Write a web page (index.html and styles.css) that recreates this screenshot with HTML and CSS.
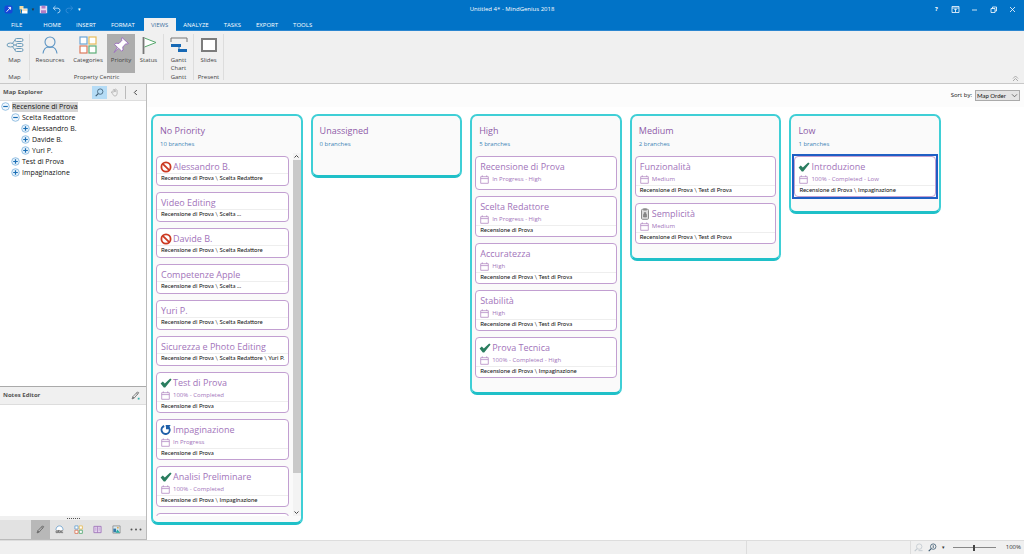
FILE: index.html
```
<!DOCTYPE html>
<html lang="en">
<head>
<meta charset="utf-8">
<title>Untitled 4* - MindGenius 2018</title>
<link rel="stylesheet" href="styles.css">
</head>
<body>
<svg class="defs" aria-hidden="true">
  <symbol id="cal" viewBox="0 0 9 9"><path d="M.7 1.7h7.6v6.600H.7zM.7 3.600h7.600M2.300.4v1.600M6.700.4v1.600" fill="none" stroke="#b48bc4" stroke-width=".8"/></symbol>
  <symbol id="check" viewBox="0 0 12 12"><path d="M.6 6.600 2.800 4.600l2 1.800L10.200 1.400l1.400 1.200L5.200 10.500H3.800z" fill="#2a7d5f"/></symbol>
  <symbol id="ban" viewBox="0 0 12 12"><circle cx="6" cy="6" r="4.600" fill="#fff" stroke="#cc3a22" stroke-width="1.800"/><path d="m2.800 2.800 6.400 6.400" stroke="#cc3a22" stroke-width="1.800"/></symbol>
  <symbol id="redo" viewBox="0 0 12 12"><path d="M4.200 2A4.100 4.100 0 1 0 9.600 5" fill="none" stroke="#1e5fa8" stroke-width="1.900"/><path d="M5.600 1h5.200L9.600 2.300l.8 3H6V3.500z" fill="#1e5fa8"/></symbol>
  <symbol id="clip" viewBox="0 0 12 12"><rect x="2.500" y="1.300" width="7" height="10" rx="1" fill="#ddd" stroke="#8a8a8a"/><rect x="4.300" y=".3" width="3.400" height="2.200" fill="#8a8a8a"/><path d="M4.500 9V6.400h3V9zM5.200 6.400V4.600h1.600v1.800" fill="#8a8a8a" stroke="#777" stroke-width=".6"/></symbol>
  <symbol id="plus" viewBox="0 0 9 9"><circle cx="4.500" cy="4.500" r="3.800" fill="#e4f1fb" stroke="#7fb2dc" stroke-width=".8"/><path d="M2.200 4.500h4.600M4.500 2.200v4.600" stroke="#1c6fb5" stroke-width="1.200"/></symbol>
  <symbol id="minus" viewBox="0 0 9 9"><circle cx="4.500" cy="4.500" r="3.800" fill="#f3f9fe" stroke="#7fb2dc" stroke-width=".8"/><path d="M2.200 4.500h4.600" stroke="#1c6fb5" stroke-width="1.200"/></symbol>
  <symbol id="mag" viewBox="0 0 10 10"><circle cx="5.800" cy="4" r="3" fill="none" stroke="#3c5a72" stroke-width=".9"/><path d="M3.600 6.200.8 9" stroke="#3c5a72" stroke-width="1.200"/></symbol>
  <symbol id="pencil" viewBox="0 0 10 10"><path d="M1.200 8.800 2 6.400 7 1.200q1-.4 1.600.8L3.500 7.900zM2 6.400l1.500 1.500M6 2.300l1.600 1.500" fill="none" stroke="#555" stroke-width=".8"/></symbol>
</svg>

<header class="titlebar">
  <div class="quick">
    <svg class="ic9" viewBox="0 0 9 9"><rect x=".5" y=".5" width="8" height="8" rx="2" fill="#1747d8"/><path d="M2.500 6.800 6.500 2.500M4.300 2.400h2.300v2.300" stroke="#fff" fill="none" stroke-width=".9"/></svg>
    <button type="button" aria-label="Open"><svg class="ic9" viewBox="0 0 9 9"><path d="M.5 1h4v3.500h-4z" fill="#f2dca0"/><rect x="3" y="3.500" width="5.500" height="5" fill="#fff"/><path d="M3 5h5.500M1.500 5v3h1" stroke="#d8b36a" fill="none" stroke-width=".8"/></svg></button>
    <span class="tiny dark">▾</span>
    <button type="button" aria-label="Save"><svg class="ic9" viewBox="0 0 9 9"><path d="M.8.8h7.400v7.400H.8z" fill="#e9d9f3"/><path d="M2.500.8h4v2.700h-4zM2 5.200h5v3H2z" fill="#b27cc4"/></svg></button>
    <button type="button" aria-label="Undo"><svg class="ic9" viewBox="0 0 9 9"><path d="M3.500 1 1.200 3.200l2.300 2.200M1.200 3.200H6q2 .3 2 2.400T5.500 8" fill="none" stroke="#a9d2f3"/></svg></button>
    <button type="button" aria-label="Redo"><svg class="ic9" viewBox="0 0 9 9"><path d="m5.500 1 2.300 2.200-2.300 2.200M7.800 3.200H3Q1 3.500 1 5.600T3.500 8" fill="none" stroke="#2f8ad6"/></svg></button>
    <span class="tiny">▾</span>
  </div>
  <h1>Untitled 4* - MindGenius 2018</h1>
  <div class="window">
    <button type="button" aria-label="Help">?</button>
    <button type="button" aria-label="Ribbon options"><svg class="ic9" viewBox="0 0 9 9"><path d="M1 1.500h7v6H1zM1 3h7M4.500 7V4M3.300 5l1.200-1.200L5.700 5" fill="none" stroke="#fff" stroke-width=".8"/></svg></button>
    <button type="button" aria-label="Minimize"><svg class="ic9" viewBox="0 0 9 9"><path d="M2 5h5" stroke="#fff" stroke-width=".8"/></svg></button>
    <button type="button" aria-label="Restore"><svg class="ic9" viewBox="0 0 9 9"><path d="M2 3.500h4v4H2zM3.500 3.500V2h4v4H6" fill="none" stroke="#fff" stroke-width=".8"/></svg></button>
    <button type="button" aria-label="Close"><svg class="ic9" viewBox="0 0 9 9"><path d="m2 2 5 5M7 2 2 7" stroke="#fff" stroke-width=".8"/></svg></button>
  </div>
</header>

<nav class="tabs">
  <a class="file" href="#">FILE</a><a href="#">HOME</a><a href="#">INSERT</a><a href="#">FORMAT</a><a class="active" href="#">VIEWS</a><a href="#">ANALYZE</a><a href="#">TASKS</a><a href="#">EXPORT</a><a href="#">TOOLS</a>
</nav>

<section class="ribbon">
  <div class="group">
    <div class="tools"><button type="button"><svg class="ic18" viewBox="0 0 18 18"><g fill="none" stroke="#6c9cba" stroke-width="1"><ellipse cx="4.500" cy="9" rx="3.500" ry="2"/><rect x="9" y="2.500" width="8" height="3" rx="1.500"/><rect x="10" y="7.500" width="7" height="3" rx="1.500"/><rect x="9" y="12.500" width="8" height="3" rx="1.500"/><path d="M8 9h2M6.500 7.300 9 4M6.500 10.700 9 14"/></g></svg><span>Map</span></button></div>
    <p>Map</p>
  </div>
  <div class="group">
    <div class="tools">
      <button type="button" class="wide"><svg class="ic18" viewBox="0 0 18 18"><g fill="none" stroke="#5d95c4" stroke-width="1.100"><circle cx="9" cy="6" r="5"/><path d="M2 17.500Q3 11.500 7 11q2 .8 4 0 4 .5 5 6.500"/></g></svg><span>Resources</span></button>
      <button type="button" class="wide"><svg class="ic18" viewBox="0 0 18 18"><g fill="#fff" stroke-width="1.200"><rect x="1" y="1" width="7" height="7" stroke="#6ca5d4"/><rect x="10" y="1" width="7" height="7" stroke="#e8bd5c"/><rect x="1" y="10" width="7" height="7" stroke="#dc7a5c"/><rect x="10" y="10" width="7" height="7" stroke="#5cae78"/></g></svg><span>Categories</span></button>
      <button type="button" class="pressed"><svg class="ic18" viewBox="0 0 18 18"><path d="m10 1.500 6.500 6-1.700.6-1-.4-3 3.300.3 3-1.500 1.200-3-3L2 16.500l3.500-5.200-3-2.800L4 7.200l3 .2 3-3.200-.5-1z" fill="#fff" stroke="#9c72bd" stroke-width="1"/></svg><span>Priority</span></button>
      <button type="button"><svg class="ic18" viewBox="0 0 18 18"><path d="M4.500 2 16 6.500 4.500 11" fill="#fff" stroke="#55a86c"/><path d="M3.500 1v17" stroke="#777" stroke-width="1.800"/></svg><span>Status</span></button>
    </div>
    <p>Property Centric</p>
  </div>
  <div class="group">
    <div class="tools"><button type="button" class="slim"><svg class="ic18" viewBox="0 0 18 18"><path d="M1 6V2h16v4" fill="none" stroke="#777"/><path d="M1 8h10v3H1zM8 13h9v3H8z" fill="#1769b5"/><path d="M9 11v3" stroke="#1769b5"/></svg><span>Gantt Chart</span></button></div>
    <p>Gantt</p>
  </div>
  <div class="group">
    <div class="tools"><button type="button" class="slim"><svg class="ic18" viewBox="0 0 18 18"><rect x="2" y="3" width="14" height="12" fill="#fff" stroke="#7c7c7c" stroke-width="2"/></svg><span>Slides</span></button></div>
    <p>Present</p>
  </div>
  <button type="button" class="collapse" aria-label="Collapse ribbon"><svg class="ic7" viewBox="0 0 7 7"><path d="M1 3.500 3.500 1 6 3.500M1 6l2.500-2.500L6 6" fill="none" stroke="#999" stroke-width=".8"/></svg></button>
</section>

<div class="workspace">
  <aside class="side">
    <div class="panel-head"><h2>Map Explorer</h2>
      <button type="button" class="lit" aria-label="Zoom"><svg class="ic9" viewBox="0 0 10 10"><use href="#mag"/></svg></button>
      <button type="button" aria-label="Pan"><svg class="ic9" viewBox="0 0 10 10"><path d="M2.500 6 1.300 4.500l1-.4L3.500 5V2l.8-.5.7.3.8-.8.8.6.7.3.6.6V6.500Q7.500 9 5.500 9 4 9 2.500 6M5 2v2.500M6.300 2v2.500" fill="none" stroke="#aaa" stroke-width=".8"/></svg></button>
      <button type="button" class="fold" aria-label="Collapse panel"><svg class="ic7" viewBox="0 0 7 7"><path d="M4.800 1 2.300 3.500 4.800 6" fill="none" stroke="#444"/></svg></button>
    </div>
    <ul class="tree">
      <li><div class="node"><svg class="ic9"><use href="#minus"/></svg><span class="picked">Recensione di Prova</span></div>
        <ul>
          <li><div class="node"><svg class="ic9"><use href="#minus"/></svg><span>Scelta Redattore</span></div>
            <ul>
              <li><div class="node"><svg class="ic9"><use href="#plus"/></svg><span>Alessandro B.</span></div></li>
              <li><div class="node"><svg class="ic9"><use href="#plus"/></svg><span>Davide B.</span></div></li>
              <li><div class="node"><svg class="ic9"><use href="#plus"/></svg><span>Yuri P.</span></div></li>
            </ul></li>
          <li><div class="node"><svg class="ic9"><use href="#plus"/></svg><span>Test di Prova</span></div></li>
          <li><div class="node"><svg class="ic9"><use href="#plus"/></svg><span>Impaginazione</span></div></li>
        </ul></li>
    </ul>
    <div class="panel-head notes-head"><h2>Notes Editor</h2>
      <button type="button" aria-label="Edit notes"><svg class="ic9" viewBox="0 0 10 10"><use href="#pencil"/><path d="M7.500 7.500h2v2h-2z" fill="#35b2ad"/></svg></button>
    </div>
    <div class="notes"></div>
    <div class="grip"><i></i></div>
    <div class="dock">
      <button type="button" class="on" aria-label="Notes"><svg class="ic9" viewBox="0 0 10 10"><use href="#pencil"/></svg></button>
      <button type="button" aria-label="Spelling"><svg class="ic9" viewBox="0 0 10 10"><path d="M1 5.500Q1.500 1 5 1t4 4.500" fill="#fff" stroke="#6aa0ce" stroke-width=".9"/><path d="M1.200 6.500h2v2h-2zM4 5.500v3h2v-2H4M9 6.500H7v2h2" fill="none" stroke="#555" stroke-width=".8"/></svg></button>
      <button type="button" aria-label="Categories"><svg class="ic9" viewBox="0 0 10 10"><g fill="#fff"><path d="M1 1h3.500v3.500H1z" stroke="#6ca5d4"/><path d="M5.800 1h3.500v3.500H5.800z" stroke="#e8bd5c"/><path d="M1 5.800h3.500v3.500H1z" stroke="#dc7a5c"/><path d="M5.800 5.800h3.500v3.500H5.800z" stroke="#5cae78"/></g></svg></button>
      <button type="button" aria-label="Library"><svg class="ic9" viewBox="0 0 10 10"><path d="M1 1.500h8v7H1z" fill="#e5d5ee" stroke="#a277bb"/><path d="M5 1.500v7M2.500 3.500h1.300M6.200 3.500h1.300M2.500 5.500h1.300M6.200 5.500h1.300" stroke="#a277bb" stroke-width=".8"/></svg></button>
      <button type="button" aria-label="Pictures"><svg class="ic9" viewBox="0 0 10 10"><path d="M1 1h8v8H1z" fill="#d9e8ef" stroke="#777" stroke-width=".7"/><path d="M1.500 4h3v4h-3z" fill="#3278a8"/><path d="M4 8.500 6 5l3 3.500z" fill="#25aaa0"/><circle cx="6.500" cy="3" r="1" fill="#e2a74d"/></svg></button>
      <button type="button" aria-label="More"><svg class="dots" viewBox="0 0 12 3"><g fill="#555"><circle cx="1.500" cy="1.500" r="1"/><circle cx="6" cy="1.500" r="1"/><circle cx="10.500" cy="1.500" r="1"/></g></svg></button>
    </div>
  </aside>

  <main class="main">
    <div class="sort"><label for="sort">Sort by:</label><div class="pick"><select id="sort"><option>Map Order</option></select><svg class="ic7" viewBox="0 0 7 7"><path d="m1 2.300 2.500 2.500L6 2.300" fill="none" stroke="#555" stroke-width=".8"/></svg></div></div>
    <div class="board">
      <section class="column">
        <h2>No Priority</h2><p class="count">10 branches</p>
        <div class="scroll">
          <div class="list">
            <article class="card"><h3><svg class="ic12"><use href="#ban"/></svg>Alessandro B.</h3><p class="path">Recensione di Prova \ Scelta Redattore</p></article>
            <article class="card"><h3>Video Editing</h3><p class="path">Recensione di Prova \ Scelta ...</p></article>
            <article class="card"><h3><svg class="ic12"><use href="#ban"/></svg>Davide B.</h3><p class="path">Recensione di Prova \ Scelta Redattore</p></article>
            <article class="card"><h3>Competenze Apple</h3><p class="path">Recensione di Prova \ Scelta ...</p></article>
            <article class="card"><h3>Yuri P.</h3><p class="path">Recensione di Prova \ Scelta Redattore</p></article>
            <article class="card"><h3>Sicurezza e Photo Editing</h3><p class="path">Recensione di Prova \ Scelta Redattore \ Yuri P.</p></article>
            <article class="card"><h3><svg class="ic12"><use href="#check"/></svg>Test di Prova</h3><p class="meta"><svg class="ic9"><use href="#cal"/></svg>100% - Completed</p><p class="path">Recensione di Prova</p></article>
            <article class="card"><h3><svg class="ic12"><use href="#redo"/></svg>Impaginazione</h3><p class="meta"><svg class="ic9"><use href="#cal"/></svg>In Progress</p><p class="path">Recensione di Prova</p></article>
            <article class="card"><h3><svg class="ic12"><use href="#check"/></svg>Analisi Preliminare</h3><p class="meta"><svg class="ic9"><use href="#cal"/></svg>100% - Completed</p><p class="path">Recensione di Prova \ Impaginazione</p></article>
            <article class="card"></article>
          </div>
          <div class="bar"><svg class="ic7" viewBox="0 0 7 7"><path d="m1.500 4.500 2-2 2 2" fill="none" stroke="#444"/></svg><i></i><svg class="ic7" viewBox="0 0 7 7"><path d="m1.500 2.500 2 2 2-2" fill="none" stroke="#444"/></svg></div>
        </div>
      </section>
      <section class="column empty">
        <h2>Unassigned</h2><p class="count">0 branches</p>
      </section>
      <section class="column">
        <h2>High</h2><p class="count">5 branches</p>
        <div class="list">
          <article class="card"><h3>Recensione di Prova</h3><p class="meta"><svg class="ic9"><use href="#cal"/></svg>In Progress - High</p></article>
          <article class="card"><h3>Scelta Redattore</h3><p class="meta"><svg class="ic9"><use href="#cal"/></svg>In Progress - High</p><p class="path">Recensione di Prova</p></article>
          <article class="card"><h3>Accuratezza</h3><p class="meta"><svg class="ic9"><use href="#cal"/></svg>High</p><p class="path">Recensione di Prova \ Test di Prova</p></article>
          <article class="card"><h3>Stabilità</h3><p class="meta"><svg class="ic9"><use href="#cal"/></svg>High</p><p class="path">Recensione di Prova \ Test di Prova</p></article>
          <article class="card"><h3><svg class="ic12"><use href="#check"/></svg>Prova Tecnica</h3><p class="meta"><svg class="ic9"><use href="#cal"/></svg>100% - Completed - High</p><p class="path">Recensione di Prova \ Impaginazione</p></article>
        </div>
      </section>
      <section class="column">
        <h2>Medium</h2><p class="count">2 branches</p>
        <div class="list">
          <article class="card"><h3>Funzionalità</h3><p class="meta"><svg class="ic9"><use href="#cal"/></svg>Medium</p><p class="path">Recensione di Prova \ Test di Prova</p></article>
          <article class="card"><h3><svg class="ic12"><use href="#clip"/></svg>Semplicità</h3><p class="meta"><svg class="ic9"><use href="#cal"/></svg>Medium</p><p class="path">Recensione di Prova \ Test di Prova</p></article>
        </div>
      </section>
      <section class="column">
        <h2>Low</h2><p class="count">1 branches</p>
        <div class="list">
          <article class="card selected"><h3><svg class="ic12"><use href="#check"/></svg>Introduzione</h3><p class="meta"><svg class="ic9"><use href="#cal"/></svg>100% - Completed - Low</p><p class="path">Recensione di Prova \ Impaginazione</p></article>
        </div>
      </section>
    </div>
  </main>
</div>

<footer class="status">
  <div class="cell"></div>
  <div class="zoom">
    <svg class="ic9 faint" viewBox="0 0 10 10"><use href="#mag"/><path d="M5 8.500h4.500" stroke="#3c5a72"/></svg>
    <button type="button" aria-label="Zoom"><svg class="ic9" viewBox="0 0 10 10"><use href="#mag"/><path d="M5.800 2.500v3" stroke="#3c5a72"/></svg></button>
    <span class="tiny dark">▾</span>
    <input type="range" min="0" max="200" value="100" aria-label="Zoom level">
    <span>100%</span>
  </div>
</footer>
</body>
</html>
```
FILE: styles.css
```
* { box-sizing: border-box; }
body {
  margin: 0;
  height: 100vh;
  display: flex;
  flex-direction: column;
  overflow: hidden;
  background: #fff;
  font: 7px/11px "Open Sans", "Noto Sans", sans-serif;
  color: #333;
}
h1, h2, h3, p, ul { margin: 0; padding: 0; font-weight: 400; }
ul { list-style: none; }
a { color: inherit; text-decoration: none; }
button {
  display: flex;
  align-items: center;
  justify-content: center;
  padding: 0;
  border: 0;
  background: none;
  color: inherit;
  font: inherit;
}
svg { display: block; flex: none; }
.defs { position: absolute; width: 0; height: 0; }
.ic7 { width: 7px; height: 7px; }
.ic9 { width: 9px; height: 9px; }
.ic12 { width: 12px; height: 12px; }
.ic18 { width: 18px; height: 18px; }
.tiny { width: 3px; font-size: 5px; color: #fff; }
.tiny.dark { color: #333; }

.titlebar {
  display: grid;
  grid-template-columns: 1fr auto 1fr;
  align-items: center;
  height: 18px;
  background: #0173c7;
  color: #fff;
}
.titlebar h1 { font-size: 6px; }
.quick { display: flex; align-items: center; gap: 4px; padding-left: 4px; }
.quick button:first-of-type { margin-left: 2px; }
.window { display: flex; justify-content: flex-end; gap: 8px; padding-right: 6px; }
.window button { width: 11px; height: 11px; font-size: 6px; font-weight: 700; }

.tabs {
  display: flex;
  height: 13px;
  padding-left: 5px;
  border-bottom: 1px solid #2a86d0;
  background: #0173c7;
  color: #fff;
  font-size: 6px;
}
.tabs a { height: 13px; padding: 2px 8px 0 7px; }
.tabs .file { padding-right: 14px; padding-left: 6px; }
.tabs .active { margin-left: 1px; background: #f0f0f0; color: #3a6f9f; }

.ribbon {
  display: flex;
  height: 53px;
  border-bottom: 1px solid #c8c8c8;
  background: #f0f0f0;
  color: #444;
  font-size: 6px;
}
.group {
  display: flex;
  flex-direction: column;
  justify-content: space-between;
  align-items: center;
  margin: 3px 0;
  padding: 0 1px;
  border-right: 1px solid #ddd;
}
.tools { display: flex; }
.tools button { flex-direction: column; justify-content: flex-start; gap: 2px; width: 27px; height: 39px; padding-top: 2px; line-height: 8px; }
.tools .wide { width: 38px; }
.tools .pressed { width: 28px; background: #adadad; }
.group p { line-height: 8px; }
.collapse { align-self: flex-end; margin: 0 5px 1px auto; }

.workspace { flex: 1; display: flex; min-height: 0; }
.side {
  display: flex;
  flex-direction: column;
  width: 147px;
  border-right: 1px solid #bbb;
}
.panel-head {
  display: flex;
  align-items: center;
  height: 17px;
  padding: 0 1px 0 3px;
  border-bottom: 1px solid #ddd;
  background: #f0f0f0;
  color: #555;
}
.panel-head h2 { flex: 1; font: 700 6px/11px "Open Sans", sans-serif; }
.panel-head button { width: 15px; height: 13px; }
.panel-head .lit { background: #b5dcf6; }
.panel-head .fold { width: 20px; margin-left: 3px; border-left: 1px solid #bbb; }
.tree { padding: 0 1px; color: #111; }
.side > .tree { flex: 1; }
.tree ul { padding-left: 10px; }
.node { display: flex; align-items: center; gap: 2px; height: 11px; line-height: 10px; }
.picked { background: #d6d6d6; }
.notes-head { border-top: 1px solid #aaa; height: 19px; padding-right: 3px; }
.notes { height: 111px; }
.grip { display: flex; justify-content: center; height: 4px; padding-top: 2px; background: #f0f0f0; }
.grip i { width: 13px; border-top: 1px dotted #555; }
.dock { display: flex; justify-content: flex-end; height: 20px; border-bottom: 1px solid #bbb; background: #e2e2e2; }
.dock button { width: 19px; }
.dock button:last-child { width: 20px; }
.dots { width: 12px; height: 3px; }
.dock .on { background: #b8b8b8; }

.main { flex: 1; display: flex; flex-direction: column; min-width: 0; }
.sort {
  display: flex;
  justify-content: flex-end;
  align-items: center;
  gap: 3px;
  height: 23px;
  padding-right: 4px;
  background: #fcfcfc;
  color: #111;
  font-size: 6px;
}
.pick { position: relative; }
.pick select {
  width: 45px;
  height: 11px;
  padding: 0 1px;
  border: 1px solid #aaa;
  border-radius: 0;
  background: #e5e5e5;
  color: #111;
  font: 6px/9px Lato, "Open Sans", sans-serif;
  appearance: none;
}
.pick svg { position: absolute; right: 2px; top: 2px; pointer-events: none; }

.board {
  flex: 1;
  display: grid;
  grid-template-columns: repeat(5, 1fr);
  grid-template-rows: 100%;
  align-items: start;
  gap: 8px;
  min-height: 0;
  padding: 7px 83px 15px 4px;
}
.column {
  display: flex;
  flex-direction: column;
  max-height: 100%;
  padding: 8px 3px 14px;
  border: 2px solid #3fcfd6;
  border-bottom: 3px solid #1fc0c8;
  border-radius: 7px;
  background: #fafafa;
}
.column h2 { padding-left: 4px; color: #8e5aa8; font-size: 9px; line-height: 13px; }
.count { padding-left: 4px; color: #3a83b5; font-size: 6px; line-height: 14px; margin-bottom: 5px; }
.empty { padding-bottom: 19px; }
.list { display: flex; flex-direction: column; gap: 6px; }
.card {
  flex: none;
  min-height: 30px;
  padding: 3px 0;
  border: 1px solid #c29fd1;
  border-radius: 4px;
  background: #fff;
}
.card h3 { display: flex; align-items: center; gap: 1px; height: 13px; padding-left: 4px; color: #a274ba; font-size: 9px; line-height: 13px; }
.card h3 svg { margin-left: -1px; }
.meta { display: flex; align-items: center; gap: 3px; height: 12px; padding-left: 4px; color: #a274ba; font-size: 6px; }
.meta:last-child { margin-bottom: 1px; }
.path { height: 8px; padding-left: 4px; border-top: 1px solid #eee; color: #111; font: 6px/7px Lato, "Open Sans", sans-serif; white-space: nowrap; }
.selected { position: relative; }
.selected::after { content: ""; position: absolute; inset: -3px; border: 2px solid #1f5fc4; }
.column:first-child { padding-right: 0; padding-bottom: 6px; }
.scroll { display: flex; gap: 4px; min-height: 0; margin-top: -3px; }
.scroll .list { flex: 1; min-width: 0; padding-top: 3px; overflow: hidden; }
.bar { display: flex; flex-direction: column; align-items: center; width: 8px; background: #f3f3f3; }
.bar i { width: 8px; height: 313px; margin-bottom: auto; background: #c9c9c9; }

.status {
  display: flex;
  justify-content: flex-end;
  height: 14px;
  border-top: 1px solid #ddd;
  background: #f0f0f0;
  font-size: 6px;
}
.cell { width: 165px; border: solid #ddd; border-width: 0 1px; }
.zoom { display: flex; align-items: center; gap: 5px; padding: 0 3px; }
.faint { opacity: .25; }
.zoom input { width: 43px; height: 9px; margin: 0 5px 0 3px; appearance: none; background: linear-gradient(#888, #888) center / 100% 1px no-repeat; }
.zoom input::-webkit-slider-thumb { appearance: none; width: 2px; height: 6px; background: #444; }
```
